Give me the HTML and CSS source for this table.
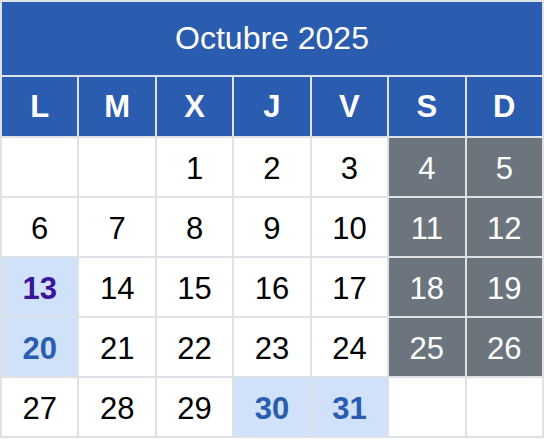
FILE: index.html
```html
<!DOCTYPE html>
<html lang="es">
<head>
<meta charset="utf-8">
<title>Octubre 2025</title>
<link rel="stylesheet" href="styles.css">
</head>
<body>
<div class="cal">
  <div class="title">Octubre 2025</div>
  <div class="dow">L</div><div class="dow">M</div><div class="dow">X</div><div class="dow">J</div><div class="dow">V</div><div class="dow">S</div><div class="dow">D</div>

  <div class="day"></div><div class="day"></div><div class="day">1</div><div class="day">2</div><div class="day">3</div><div class="day we">4</div><div class="day we">5</div>
  <div class="day">6</div><div class="day">7</div><div class="day">8</div><div class="day">9</div><div class="day">10</div><div class="day we">11</div><div class="day we">12</div>
  <div class="day hl today">13</div><div class="day">14</div><div class="day">15</div><div class="day">16</div><div class="day">17</div><div class="day we">18</div><div class="day we">19</div>
  <div class="day hl">20</div><div class="day">21</div><div class="day">22</div><div class="day">23</div><div class="day">24</div><div class="day we">25</div><div class="day we">26</div>
  <div class="day">27</div><div class="day">28</div><div class="day">29</div><div class="day hl">30</div><div class="day hl">31</div><div class="day"></div><div class="day"></div>
</div>
</body>
</html>
```

FILE: styles.css
```css
html, body {
  margin: 0;
  padding: 0;
  background: #ffffff;
}
body {
  font-family: "Liberation Sans", Arial, sans-serif;
}
.cal {
  box-sizing: border-box;
  display: grid;
  grid-template-columns: repeat(7, 1fr);
  grid-template-rows: 73px 59px repeat(5, 58px);
  gap: 2px;
  padding: 2px;
  width: 544px;
  background: #dee2e6;
}
.title {
  grid-column: 1 / span 7;
  background: #2a5caf;
  color: #ffffff;
  font-size: 32px;
  display: flex;
  align-items: center;
  justify-content: center;
}
.dow {
  background: #2a5caf;
  color: #ffffff;
  font-size: 31px;
  font-weight: bold;
  display: flex;
  align-items: center;
  justify-content: center;
}
.day {
  box-sizing: border-box;
  padding-top: 3px;
  background: #ffffff;
  color: #000000;
  font-size: 31px;
  display: flex;
  align-items: center;
  justify-content: center;
}
.day.we {
  background: #6c757d;
  color: #ffffff;
}
.day.hl {
  background: #cfe2fa;
  color: #2a5caf;
  font-weight: bold;
}
.day.today {
  color: #3a159c;
}
```
